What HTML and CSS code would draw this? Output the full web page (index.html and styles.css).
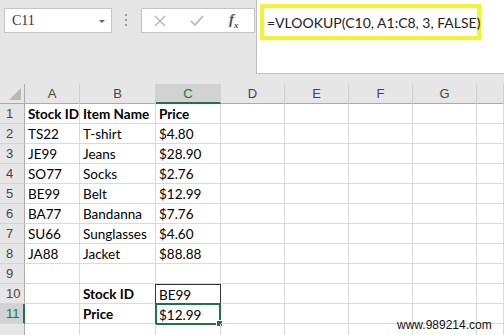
FILE: index.html
```html
<!DOCTYPE html>
<html lang="en">

<head>
    <meta charset="UTF-8">
    <title>VLOOKUP</title>
    <link rel="stylesheet" href="styles.css">
</head>

<body>
    <header class="toolbar">
        <div class="name-box">
            <span>C11</span>
            <span class="name-arrow"></span>
        </div>
        <div class="grip">
            <span></span><span></span><span></span>
        </div>
        <div class="fx-buttons">
            <svg class="fx-icon" width="12" height="12" viewBox="0 0 12 12">
                <path d="M1 1 L11 11 M11 1 L1 11" stroke="#b4b4b4" stroke-width="1.4" fill="none" />
            </svg>
            <svg class="fx-icon" width="14" height="12" viewBox="0 0 14 12">
                <path d="M1 6 L5 10 L13 1" stroke="#b4b4b4" stroke-width="1.6" fill="none" />
            </svg>
            <span class="fx-label">f<sub>x</sub></span>
        </div>
        <div class="formula">
            <div class="formula-mark">=VLOOKUP(C10, A1:C8, 3, FALSE)</div>
        </div>
    </header>

    <div class="sheet">
        <div class="corner"></div>
        <div class="col-head">A</div>
        <div class="col-head">B</div>
        <div class="col-head selected">C</div>
        <div class="col-head">D</div>
        <div class="col-head">E</div>
        <div class="col-head">F</div>
        <div class="col-head">G</div>
        <div class="col-head"></div>

        <div class="row-head">1</div>
        <div class="cell bold">Stock ID</div>
        <div class="cell bold">Item Name</div>
        <div class="cell bold">Price</div>
        <div class="cell"></div><div class="cell"></div><div class="cell"></div><div class="cell"></div><div class="cell"></div>

        <div class="row-head">2</div>
        <div class="cell">TS22</div>
        <div class="cell">T-shirt</div>
        <div class="cell">$4.80</div>
        <div class="cell"></div><div class="cell"></div><div class="cell"></div><div class="cell"></div><div class="cell"></div>

        <div class="row-head">3</div>
        <div class="cell">JE99</div>
        <div class="cell">Jeans</div>
        <div class="cell">$28.90</div>
        <div class="cell"></div><div class="cell"></div><div class="cell"></div><div class="cell"></div><div class="cell"></div>

        <div class="row-head">4</div>
        <div class="cell">SO77</div>
        <div class="cell">Socks</div>
        <div class="cell">$2.76</div>
        <div class="cell"></div><div class="cell"></div><div class="cell"></div><div class="cell"></div><div class="cell"></div>

        <div class="row-head">5</div>
        <div class="cell">BE99</div>
        <div class="cell">Belt</div>
        <div class="cell">$12.99</div>
        <div class="cell"></div><div class="cell"></div><div class="cell"></div><div class="cell"></div><div class="cell"></div>

        <div class="row-head">6</div>
        <div class="cell">BA77</div>
        <div class="cell">Bandanna</div>
        <div class="cell">$7.76</div>
        <div class="cell"></div><div class="cell"></div><div class="cell"></div><div class="cell"></div><div class="cell"></div>

        <div class="row-head">7</div>
        <div class="cell">SU66</div>
        <div class="cell">Sunglasses</div>
        <div class="cell">$4.60</div>
        <div class="cell"></div><div class="cell"></div><div class="cell"></div><div class="cell"></div><div class="cell"></div>

        <div class="row-head">8</div>
        <div class="cell">JA88</div>
        <div class="cell">Jacket</div>
        <div class="cell">$88.88</div>
        <div class="cell"></div><div class="cell"></div><div class="cell"></div><div class="cell"></div><div class="cell"></div>

        <div class="row-head">9</div>
        <div class="cell"></div><div class="cell"></div><div class="cell"></div>
        <div class="cell"></div><div class="cell"></div><div class="cell"></div><div class="cell"></div><div class="cell"></div>

        <div class="row-head">10</div>
        <div class="cell"></div>
        <div class="cell bold">Stock ID</div>
        <div class="cell boxed">BE99</div>
        <div class="cell"></div><div class="cell"></div><div class="cell"></div><div class="cell"></div><div class="cell"></div>

        <div class="row-head selected">11</div>
        <div class="cell"></div>
        <div class="cell bold">Price</div>
        <div class="cell active">$12.99<span class="handle"></span></div>
        <div class="cell"></div><div class="cell"></div><div class="cell"></div><div class="cell"></div><div class="cell"></div>

        <div class="row-head last"></div>
        <div class="cell"></div><div class="cell"></div><div class="cell"></div>
        <div class="cell"></div><div class="cell"></div><div class="cell"></div><div class="cell"></div><div class="cell"></div>
    </div>

    <div class="watermark">www.989214.com</div>
</body>

</html>
```

FILE: styles.css
```css
body {
    margin: 0;
    width: 504px;
    height: 335px;
    overflow: hidden;
    position: relative;
    background-color: #e6e6e6;
    font-family: Lato, "Liberation Sans", sans-serif;
    color: #000;
}

/* Top strip: name box, buttons and formula */
.toolbar {
    display: flex;
    height: 84px;
    align-items: flex-start;
}

.name-box {
    display: flex;
    align-items: center;
    justify-content: space-between;
    box-sizing: border-box;
    width: 108px;
    height: 25px;
    margin: 8px 0 0 4px;
    padding: 0 6px 0 7px;
    background-color: #fff;
    border: 1px solid #c6c6c6;
    font-family: "Liberation Serif", serif;
    font-size: 14px;
    color: #333;
}

.name-arrow {
    border: 3.5px solid;
    border-color: #666 transparent transparent;
    margin-top: 4px;
}

.grip {
    display: flex;
    flex-direction: column;
    gap: 3px;
    margin: 14px 0 0 13px;
}

.grip span {
    width: 2px;
    height: 2px;
    background-color: #9a9a9a;
}

.fx-buttons {
    display: flex;
    align-items: center;
    box-sizing: border-box;
    width: 114px;
    height: 25px;
    margin: 8px 0 0 14px;
    padding-left: 12px;
    gap: 24px;
    background-color: #fff;
    border: 1px solid #c6c6c6;
}

.fx-label {
    margin-left: 1px;
    font-family: "Liberation Serif", serif;
    font-style: italic;
    font-weight: bold;
    font-size: 15px;
    color: #555;
}

.fx-label sub {
    font-size: 9px;
}

.formula {
    flex: 1;
    box-sizing: border-box;
    height: 74px;
    margin-left: 1px;
    padding: 4px 0 0 3px;
    background-color: #fff;
    border-left: 1px solid #bdbdbd;
    border-bottom: 1px solid #c6c6c6;
}

.formula-mark {
    display: inline-block;
    box-sizing: border-box;
    width: 221px;
    height: 36px;
    padding: 6px 0 0 3px;
    border: 4px solid #f3f334;
    font-size: 14px;
    white-space: nowrap;
    color: #222;
}

/* Grid */
.sheet {
    display: grid;
    grid-template-columns: 25px 55px 76px 65px 64px 64px 64px 64px 1fr;
    grid-auto-rows: 20px;
    background-color: #fff;
}

.corner,
.col-head,
.row-head {
    background-color: #e6e6e6;
    color: #444;
    font-family: "Liberation Sans", sans-serif;
    font-size: 13px;
    box-sizing: border-box;
}

.corner {
    position: relative;
    border-right: 1px solid #ababab;
    border-bottom: 1px solid #ababab;
}

.corner::after {
    content: "";
    position: absolute;
    right: 3px;
    bottom: 3px;
    border: 6px solid;
    border-color: transparent #b9b9b9 #b9b9b9 transparent;
}

.col-head {
    display: flex;
    align-items: center;
    justify-content: center;
    border-right: 1px solid #cfcfcf;
    border-bottom: 1px solid #ababab;
}

.col-head.selected {
    background-color: #d2d2d2;
    color: #217346;
    border-bottom: 2px solid #217346;
}

.row-head {
    display: flex;
    align-items: center;
    padding-left: 6px;
    border-right: 1px solid #ababab;
    border-bottom: 1px solid #d4d4d4;
}

.row-head.selected {
    background-color: #d2d2d2;
    color: #217346;
    border-right: 2px solid #217346;
}

.cell {
    position: relative;
    display: flex;
    align-items: center;
    box-sizing: border-box;
    padding: 1px 0 0 3px;
    border-right: 1px solid #dadada;
    border-bottom: 1px solid #dadada;
    font-size: 13.5px;
    white-space: nowrap;
}

.bold {
    font-weight: bold;
}

.boxed {
    border: 1px solid #333;
    border-bottom: 0;
    margin-left: -1px;
    padding-left: 3px;
}

.active {
    border: 2px solid #217346;
    margin: -1px 0 -1px -1px;
    padding-left: 2px;
}

.handle {
    position: absolute;
    right: -4px;
    bottom: -4px;
    width: 5px;
    height: 5px;
    background-color: #217346;
    border: 1px solid #fff;
}

.watermark {
    position: absolute;
    left: 397px;
    top: 318px;
    font-family: "Liberation Sans", sans-serif;
    font-size: 12px;
    color: #111;
}
```
